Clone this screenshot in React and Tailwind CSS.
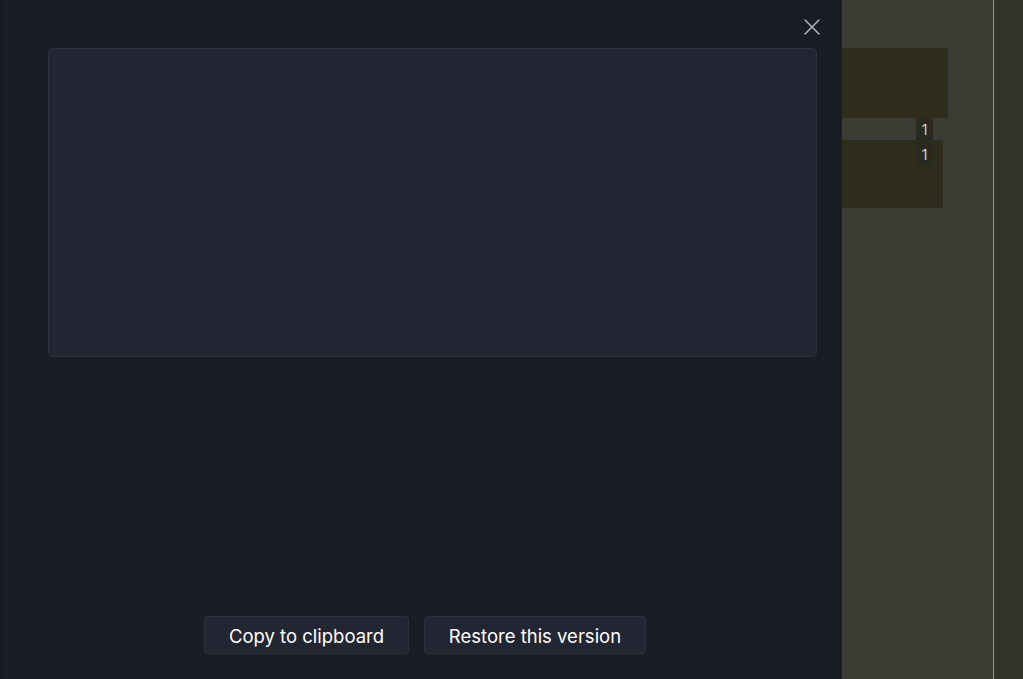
import { X } from "lucide-react";

function Badge({ children, className }) {
  return (
    <div
      className={
        "absolute w-[17px] h-[23px] rounded-[3px] bg-[#29291f] text-[14px] leading-[23px] text-center text-[#d2d2c8] " +
        className
      }
    >
      {children}
    </div>
  );
}

export default function App() {
  return (
    <div
      className="flex h-[679px] w-full overflow-hidden bg-[#33332a]"
      style={{ fontFamily: "Inter, 'Liberation Sans', sans-serif" }}
    >
      <div className="relative flex flex-col w-[842px] shrink-0 bg-[#1a1d26] border-l-[3px] border-[#161920]">
        <button className="absolute top-[13px] right-[16px] text-[#a7adbb]">
          <X size={28} strokeWidth={1.4} />
        </button>
        <div className="mt-[48px] ml-[45px] w-[769px] h-[309px] rounded-[5px] border border-[#2e3340] bg-[#222633]" />
        <div className="flex-1" />
        <div className="flex justify-center gap-[15px] mb-[25px] pl-[5px]">
          <button className="w-[205px] h-[38px] pt-[3px] rounded-[4px] border border-[#2c3140] bg-[#222632] text-[18.5px] text-white">
            Copy to clipboard
          </button>
          <button className="w-[222px] h-[38px] pt-[3px] rounded-[4px] border border-[#2c3140] bg-[#222632] text-[18.5px] text-white">
            Restore this version
          </button>
        </div>
      </div>
      <div className="relative w-[151px] shrink-0 bg-[#3b3c34] pt-[48px]">
        <div className="w-[106px] h-[70px] bg-[#2e2d1c]" />
        <div className="mt-[22px] w-[101px] h-[68px] bg-[#2e2d1c]" />
        <Badge className="left-[74px] top-[118px]">1</Badge>
        <Badge className="left-[74px] top-[143px]">1</Badge>
      </div>
      <div className="w-px shrink-0 bg-[#4fbf55]" />
      <div className="flex-1 bg-[#33332a]" />
    </div>
  );
}
